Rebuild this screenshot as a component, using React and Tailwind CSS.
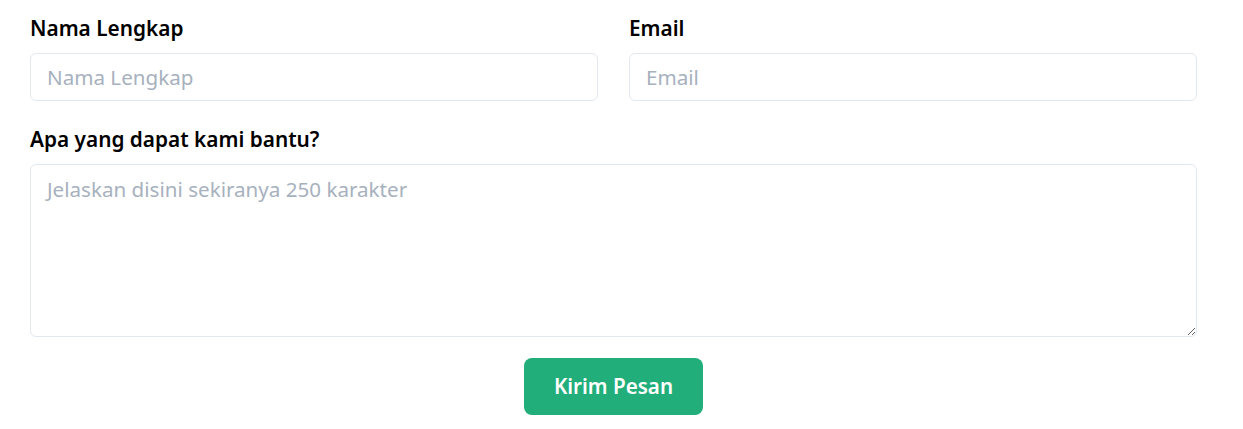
import React, { useState } from 'react';

function App() {
  const [name, setName] = useState('');
  const [email, setEmail] = useState('');
  const [message, setMessage] = useState('');

  const inputClass =
    'w-full h-12 px-4 rounded-md border border-[#e2e8f0] bg-white text-[20.6px] text-gray-800 placeholder:text-[#a7b1be] focus:outline-none';

  return (
    <div className="min-h-screen bg-white font-['Noto_Sans',sans-serif]">
      <form className="w-[1167px] ml-[30px] pt-[14px]" onSubmit={(e) => e.preventDefault()}>
        <div className="grid grid-cols-2 gap-[31px]">
          <div>
            <label className="block text-[20.8px] font-semibold text-black leading-7 mb-[11px]">Nama Lengkap</label>
            <input
              type="text"
              placeholder="Nama Lengkap"
              value={name}
              onChange={(e) => setName(e.target.value)}
              className={inputClass}
            />
          </div>
          <div>
            <label className="block text-[20.8px] font-semibold text-black leading-7 mb-[11px]">Email</label>
            <input
              type="email"
              placeholder="Email"
              value={email}
              onChange={(e) => setEmail(e.target.value)}
              className={inputClass}
            />
          </div>
        </div>

        <div className="mt-[24px]">
          <label className="block text-[20.8px] font-semibold text-black leading-7 mb-[11px]">Apa yang dapat kami bantu?</label>
          <textarea
            placeholder="Jelaskan disini sekiranya 250 karakter"
            value={message}
            onChange={(e) => setMessage(e.target.value)}
            className="block w-full h-[173px] px-4 py-[9px] rounded-md border border-[#e2e8f0] bg-white text-[20.6px] text-gray-800 placeholder:text-[#a7b1be] focus:outline-none"
          />
        </div>

        <div className="flex justify-center mt-[21px]">
          <button
            type="submit"
            className="w-[179px] h-[57px] rounded-lg bg-[#21ae7a] text-white text-[20.6px] font-semibold"
          >
            Kirim Pesan
          </button>
        </div>
      </form>
    </div>
  );
}

export default App;
